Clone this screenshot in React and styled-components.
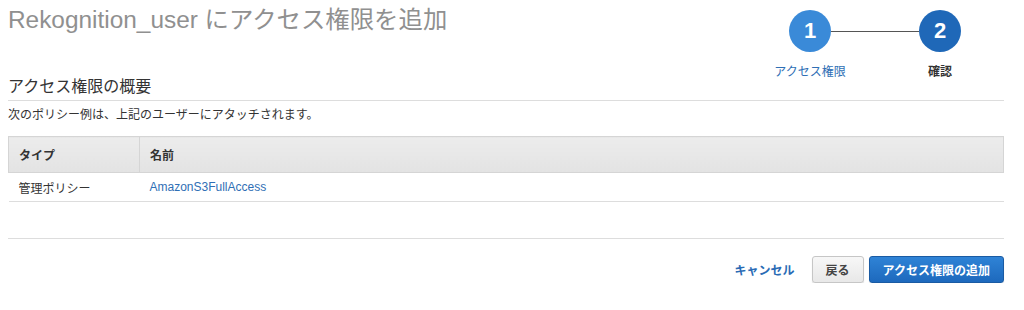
import React from "react";
import styled, { createGlobalStyle } from "styled-components";

const GlobalStyle = createGlobalStyle`
  html, body {
    margin: 0;
    padding: 0;
    background: #fff;
  }
  body {
    font-family: "Liberation Sans", Arial, "Noto Sans CJK JP", sans-serif;
    color: #333;
  }
`;

const Page = styled.div`
  padding: 0 20px 0 8px;
  width: 1024px;
  box-sizing: border-box;
`;

const Header = styled.div`
  display: flex;
  justify-content: space-between;
  align-items: flex-start;
  height: 78px;
`;

const Title = styled.h1`
  margin: 4px 0 0;
  font-size: 24.4px;
  line-height: 32px;
  font-weight: normal;
  color: #909090;
`;

const Stepper = styled.div`
  display: flex;
  align-items: flex-start;
  margin: 10px 24px 0 0;
`;

const Step = styled.div`
  width: 80px;
  display: flex;
  flex-direction: column;
  align-items: center;
  position: relative;
  z-index: 1;
`;

const Circle = styled.div`
  width: 42px;
  height: 42px;
  border-radius: 50%;
  background: ${({ $active }) => ($active ? "#1f68b8" : "#3a8ad8")};
  color: #fff;
  font-weight: bold;
  font-size: 22px;
  display: flex;
  align-items: center;
  justify-content: center;
`;

const StepLabel = styled.div`
  margin-top: 13px;
  font-size: 12px;
  line-height: 14px;
  white-space: nowrap;
  color: ${({ $active }) => ($active ? "#333" : "#2f6fb5")};
  font-weight: ${({ $active }) => ($active ? "bold" : "normal")};
`;

const Connector = styled.div`
  width: 88px;
  height: 1px;
  background: #555;
  margin: 21px -19px 0;
`;

const SectionTitle = styled.h2`
  margin: 0;
  font-size: 16px;
  line-height: 18px;
  font-weight: normal;
  color: #333;
  padding-bottom: 4px;
  border-bottom: 1px solid #ddd;
`;

const Description = styled.p`
  margin: 6px 0 0;
  font-size: 12px;
  line-height: 16px;
  color: #333;
`;

const Table = styled.table`
  width: 100%;
  border-collapse: collapse;
  margin-top: 13px;
  font-size: 12px;
`;

const Th = styled.th`
  text-align: left;
  font-weight: bold;
  height: 36px;
  padding: 0 10px;
  background: linear-gradient(#ececec, #e3e3e3);
  border: 1px solid #d5d5d5;
  color: #333;
  width: ${({ $w }) => $w || "auto"};
  box-sizing: border-box;
`;

const Td = styled.td`
  height: 28px;
  padding: 0 10px;
  border-bottom: 1px solid #ddd;
  color: #333;
`;

const Link = styled.a`
  color: #2f6fb5;
  text-decoration: none;
`;

const Divider = styled.div`
  margin-top: 36px;
  border-top: 1px solid #ddd;
`;

const Actions = styled.div`
  display: flex;
  justify-content: flex-end;
  align-items: center;
  gap: 5px;
  margin-top: 17px;
`;

const CancelLink = styled.a`
  color: #2a6bb5;
  font-weight: bold;
  font-size: 12px;
  margin-right: 12px;
  text-decoration: none;
`;

const Button = styled.button`
  height: 27px;
  padding: 0 13px;
  border-radius: 3px;
  font-family: inherit;
  font-size: 12px;
  font-weight: bold;
  border: 1px solid ${({ $primary }) => ($primary ? "#1a5ba3" : "#c6c6c6")};
  color: ${({ $primary }) => ($primary ? "#fff" : "#444")};
  background: ${({ $primary }) =>
    $primary ? "linear-gradient(#2f83d6, #1d69bd)" : "linear-gradient(#f7f7f7, #e8e8e8)"};
  box-shadow: 0 1px 1px rgba(0, 0, 0, 0.15);
`;

export default function App() {
  return (
    <>
      <GlobalStyle />
      <Page>
        <Header>
          <Title>Rekognition_user にアクセス権限を追加</Title>
          <Stepper>
            <Step>
              <Circle>1</Circle>
              <StepLabel>アクセス権限</StepLabel>
            </Step>
            <Connector />
            <Step>
              <Circle $active>2</Circle>
              <StepLabel $active>確認</StepLabel>
            </Step>
          </Stepper>
        </Header>
        <SectionTitle>アクセス権限の概要</SectionTitle>
        <Description>次のポリシー例は、上記のユーザーにアタッチされます。</Description>
        <Table>
          <thead>
            <tr>
              <Th $w="131px">タイプ</Th>
              <Th>名前</Th>
            </tr>
          </thead>
          <tbody>
            <tr>
              <Td>管理ポリシー</Td>
              <Td>
                <Link href="#">AmazonS3FullAccess</Link>
              </Td>
            </tr>
          </tbody>
        </Table>
        <Divider />
        <Actions>
          <CancelLink href="#">キャンセル</CancelLink>
          <Button>戻る</Button>
          <Button $primary>アクセス権限の追加</Button>
        </Actions>
      </Page>
    </>
  );
}
